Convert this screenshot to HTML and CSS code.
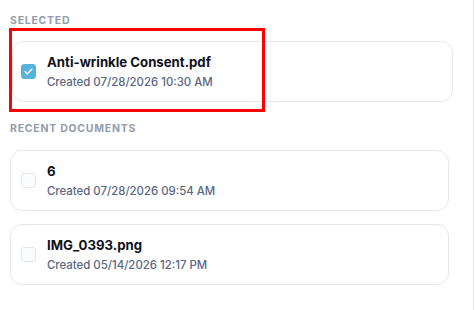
FILE: index.html
```html
<!DOCTYPE html>
<html lang="en">

<head>
    <meta charset="UTF-8">
    <meta name="viewport" content="width=device-width, initial-scale=1">
    <title>Documents</title>
    <link rel="stylesheet" href="styles.css">
</head>

<body>
    <div class="panel">

        <section class="group">
            <h3 class="group-label">Selected</h3>
            <div class="doc-wrap">
                <div class="doc doc-selected">
                    <span class="check checked">
                        <svg viewBox="0 0 16 16" width="11" height="11">
                            <path d="M3.2 8.4 6.4 11.4 12.8 4.8" fill="none" stroke="#fff" stroke-width="2.2"
                                stroke-linecap="round" stroke-linejoin="round" />
                        </svg>
                    </span>
                    <div class="doc-text">
                        <div class="doc-name">Anti-wrinkle Consent.pdf</div>
                        <div class="doc-date">Created 07/28/2026 10:30 AM</div>
                    </div>
                </div>
                <!-- annotation frame -->
                <div class="highlight"></div>
            </div>
        </section>

        <section class="group">
            <h3 class="group-label">Recent Documents</h3>
            <div class="doc">
                <span class="check"></span>
                <div class="doc-text">
                    <div class="doc-name">6</div>
                    <div class="doc-date">Created 07/28/2026 09:54 AM</div>
                </div>
            </div>
            <div class="doc">
                <span class="check"></span>
                <div class="doc-text">
                    <div class="doc-name">IMG_0393.png</div>
                    <div class="doc-date">Created 05/14/2026 12:17 PM</div>
                </div>
            </div>
        </section>

    </div>
</body>

</html>
```

FILE: styles.css
```css
:root {
    --label: #939cae;
    --ink: #10121c;
    --muted: #5a677e;
    --line: #e3e7ef;
    --accent: #56b3da;
    --mark: #ff0000;
}

* {
    margin: 0;
    padding: 0;
    box-sizing: border-box;
}

body {
    font-family: Inter, "Noto Sans", Arial, sans-serif;
    background: #ffffff;
    color: var(--ink);
}

/* Panel */
.panel {
    width: 474px;
    height: 310px;
    padding: 14px 0 0 10px;
    border-right: 1px solid #e8ebf0;
}

/* Groups */
.group + .group {
    margin-top: 20px;
}

.group-label {
    font-size: 10.5px;
    line-height: 14px;
    font-weight: 700;
    letter-spacing: 0.75px;
    text-transform: uppercase;
    color: var(--label);
    margin-bottom: 13px;
}

.group + .group .group-label {
    margin-bottom: 14px;
}

/* Document rows */
.doc {
    display: flex;
    align-items: center;
    width: 439px;
    height: 61px;
    padding-left: 10px;
    border: 1px solid var(--line);
    border-radius: 12px;
    background: #ffffff;
}

.doc + .doc {
    margin-top: 13px;
}

.doc-wrap {
    position: relative;
}

.doc-selected {
    width: 441px;
    margin-left: 2px;
    padding-left: 8px;
}

.doc-text {
    margin-left: 11px;
    display: flex;
    flex-direction: column;
    gap: 4px;
}

.doc-name {
    font-size: 13.2px;
    line-height: 17px;
    font-weight: 700;
    color: var(--ink);
}

.doc-date {
    font-size: 11.4px;
    line-height: 15px;
    font-weight: 500;
    color: var(--muted);
}

/* Checkbox */
.check {
    width: 15px;
    height: 15px;
    flex: none;
    border: 1px solid var(--line);
    border-radius: 3px;
    background: #fbfcfd;
    display: flex;
    align-items: center;
    justify-content: center;
}

.check.checked {
    background: var(--accent);
    border-color: var(--accent);
}

/* Red annotation frame */
.highlight {
    position: absolute;
    left: -1px;
    top: -13px;
    width: 256px;
    height: 84px;
    border: 3px solid var(--mark);
}
```
